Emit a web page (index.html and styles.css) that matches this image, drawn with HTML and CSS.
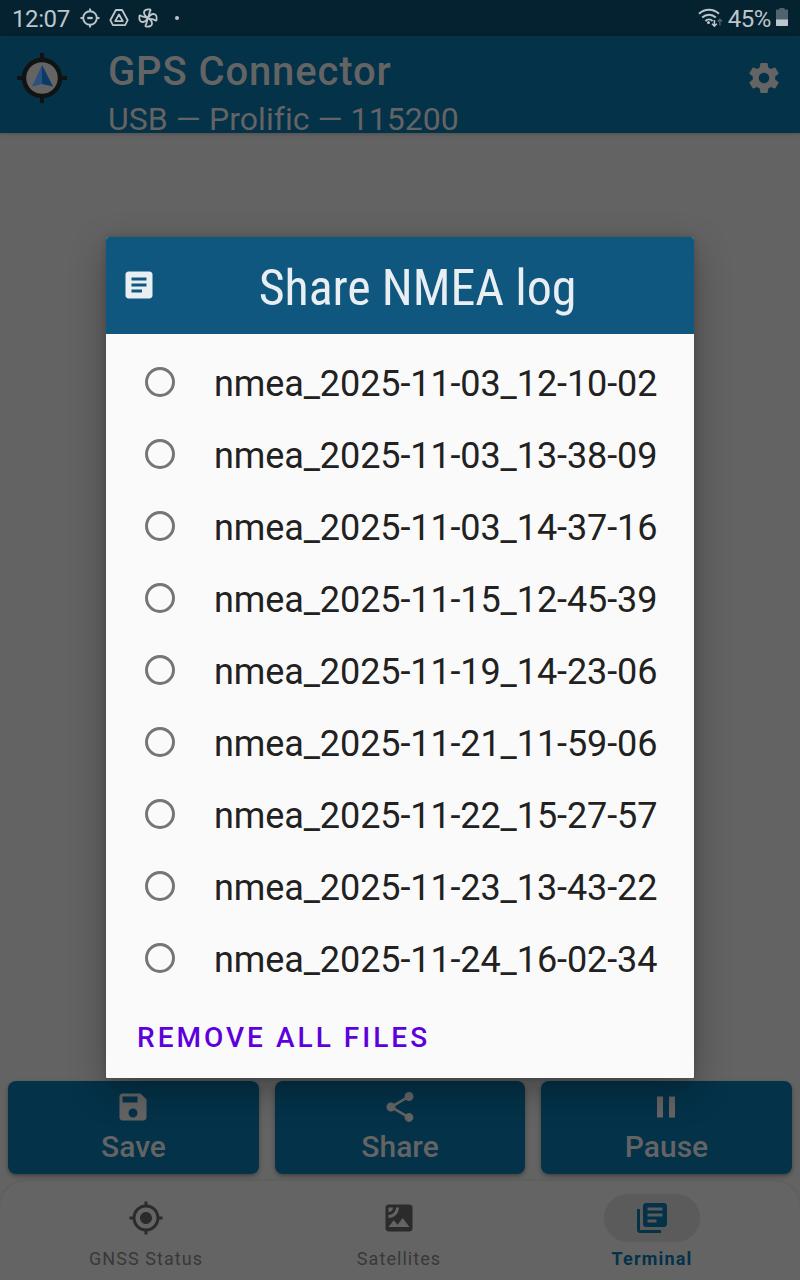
FILE: index.html
```html
<!DOCTYPE html>
<html lang="en">
<head>
    <meta charset="UTF-8">
    <meta name="viewport" content="width=device-width, initial-scale=1.0">
    <title>GPS Connector</title>
    <link rel="stylesheet" href="styles.css">
</head>
<body>
    <div class="status-bar">
        <span class="clock">12:07</span>
        <svg class="status-icon" viewBox="0 0 20 20" fill="none" stroke="currentColor" stroke-width="1.9">
            <circle cx="10" cy="10" r="6.8"/>
            <path d="M10 .5v2.900M10 16.600v2.900M.5 10h2.900M16.600 10h2.900"/>
            <path d="M7.300 10h5.400" stroke-width="2.300"/>
        </svg>
        <svg class="status-icon drive" viewBox="0 0 20 20" fill="none" stroke="currentColor" stroke-width="1.800" stroke-linejoin="round">
            <path d="M6.900 2h6.200l5.600 10.200-2.600 5H3.900l-2.600-5z"/>
            <path d="M10 6.500l3.800 6.600H6.200z"/>
        </svg>
        <svg class="status-icon fan" viewBox="0 0 20 20" fill="none" stroke="currentColor" stroke-width="1.800" stroke-linejoin="round">
            <path d="M10 10C7.500 8.500 5.800 6.500 6 4.200 6.200 2 8.500 1 11.800 1.400c.8.1 1 .9.500 1.500C11 4.700 11.500 7 10 10z"/>
            <path d="M10 10C11.500 7.500 13.500 5.800 15.800 6c2.200.2 3.200 2.500 2.800 5.800-.1.800-.9 1-1.500.5C15.300 11 13 11.500 10 10z"/>
            <path d="M10 10c2.500 1.500 4.200 3.500 4 5.800-.2 2.200-2.500 3.200-5.800 2.800-.8-.1-1-.9-.5-1.500C9 15.300 8.500 13 10 10z"/>
            <path d="M10 10C8.500 12.500 6.500 14.200 4.200 14 2 13.800 1 11.500 1.400 8.200c.1-.8.9-1 1.500-.5C4.700 9 7 8.500 10 10z"/>
        </svg>
        <span class="more-dot"></span>
        <svg class="wifi" viewBox="0 0 26 20" fill="none" stroke="currentColor" stroke-width="2">
            <path d="M1 5.800c5.700-5.300 14.300-5.300 20 0M4.200 9.400c3.900-3.700 9.700-3.700 13.600 0M7.400 12.900c2-1.900 5.200-1.900 7.200 0"/>
            <circle cx="10.500" cy="14.600" r="1.500" fill="currentColor" stroke="none"/>
            <path d="M16.400 12v6M14 15.800l2.400 2.400 2.400-2.400" stroke-width="1.600"/>
            <path d="M21.900 17.500v-6M19.700 13.500l2.200-2.200 2.200 2.200" stroke-width="1.400" opacity=".4"/>
        </svg>
        <span class="battery-text">45%</span>
        <svg class="battery" viewBox="0 0 12 18">
            <path d="M3.500 0h5v1.500H12V18H0V1.500h3.500z" fill="#50646f"/>
            <path d="M0 11.500h12V17q0 1-1 1H1q-1 0-1-1z" fill="#bdc6ca"/>
        </svg>
    </div>

    <header class="app-bar">
        <svg class="app-logo" viewBox="0 0 50 50">
            <path d="M25 0v50M0 25h50" stroke="#111313" stroke-width="4"/>
            <circle cx="25" cy="25" r="18" fill="#646464" stroke="#111313" stroke-width="4.500"/>
            <path d="M25 12v19l-10 2.500z" fill="#29527f"/>
            <path d="M25 12l11 21.500L25 31z" fill="#0c3967"/>
        </svg>
        <div class="app-titles">
            <h1 class="app-title">GPS Connector</h1>
            <p class="app-subtitle">USB — Prolific — 115200</p>
        </div>
        <svg class="icon settings" viewBox="0 0 24 24"><path d="M19.430 12.980c.04-.32.07-.64.07-.98s-.03-.66-.07-.98l2.110-1.650c.19-.15.24-.42.12-.64l-2-3.460c-.12-.22-.39-.3-.61-.22l-2.490 1c-.52-.4-1.080-.73-1.690-.98l-.38-2.650C14.460 2.180 14.250 2 14 2h-4c-.25 0-.46.18-.49.42l-.38 2.650c-.61.25-1.170.59-1.690.98l-2.490-1c-.23-.09-.49 0-.61.22l-2 3.460c-.13.22-.07.49.12.64l2.110 1.650c-.04.32-.07.65-.07.98s.03.66.07.98l-2.110 1.650c-.19.15-.24.42-.12.64l2 3.460c.12.22.39.3.61.22l2.490-1c.52.4 1.080.73 1.690.98l.38 2.650c.03.24.24.42.49.42h4c.25 0 .46-.18.49-.42l.38-2.650c.61-.25 1.170-.59 1.690-.98l2.490 1c.23.09.49 0 .61-.22l2-3.460c.12-.22.07-.49-.12-.64l-2.110-1.650zM12 15.500c-1.930 0-3.500-1.570-3.500-3.500s1.570-3.500 3.500-3.500 3.500 1.570 3.500 3.500-1.570 3.500-3.500 3.500z"/></svg>
    </header>

    <main class="terminal">
        <div class="button-row">
            <button class="btn">
                <svg class="icon" viewBox="0 0 24 24"><path d="M17 3H5c-1.110 0-2 .9-2 2v14c0 1.100.89 2 2 2h14c1.100 0 2-.9 2-2V7l-4-4zm-5 16c-1.660 0-3-1.340-3-3s1.340-3 3-3 3 1.340 3 3-1.340 3-3 3zm3-10H5V5h10v4z"/></svg>
                <span>Save</span>
            </button>
            <button class="btn">
                <svg class="icon" viewBox="0 0 24 24"><path d="M18 16.080c-.76 0-1.440.3-1.960.77L8.910 12.700c.05-.23.09-.46.09-.7s-.04-.47-.09-.7l7.050-4.110c.54.5 1.250.81 2.040.81 1.660 0 3-1.340 3-3s-1.340-3-3-3-3 1.340-3 3c0 .24.04.47.09.7L8.040 9.810C7.500 9.310 6.790 9 6 9c-1.660 0-3 1.340-3 3s1.340 3 3 3c.79 0 1.500-.31 2.040-.81l7.120 4.160c-.05.21-.08.43-.08.65 0 1.610 1.310 2.920 2.920 2.920s2.920-1.310 2.920-2.920-1.310-2.920-2.920-2.920z"/></svg>
                <span>Share</span>
            </button>
            <button class="btn">
                <svg class="icon" viewBox="0 0 24 24"><path d="M6 19h4V5H6v14zm8-14v14h4V5h-4z"/></svg>
                <span>Pause</span>
            </button>
        </div>
    </main>

    <nav class="bottom-nav">
        <a class="nav-item">
            <span class="nav-pill"><svg class="icon" viewBox="0 0 24 24"><path d="M12 8c-2.210 0-4 1.790-4 4s1.790 4 4 4 4-1.790 4-4-1.790-4-4-4zm8.940 3c-.46-4.170-3.770-7.480-7.940-7.940V1h-2v2.060C6.830 3.520 3.520 6.830 3.060 11H1v2h2.060c.46 4.170 3.770 7.480 7.940 7.940V23h2v-2.060c4.170-.46 7.480-3.770 7.940-7.940H23v-2h-2.060zM12 19c-3.870 0-7-3.130-7-7s3.130-7 7-7 7 3.130 7 7-3.130 7-7 7z"/></svg></span>
            <span class="nav-label">GNSS Status</span>
        </a>
        <a class="nav-item">
            <span class="nav-pill"><svg class="icon" viewBox="0 0 24 24"><path d="M19 3H5c-1.100 0-2 .9-2 2v14c0 1.100.9 2 2 2h14c1.100 0 2-.9 2-2V5c0-1.100-.9-2-2-2zM5 4.990h3C8 6.650 6.660 8 5 8V4.990zM5 12v-2c2.760 0 5-2.250 5-5.010h2C12 8.860 8.870 12 5 12zm0 6l3.500-4.500 2.500 3.010L14.500 12l4.500 6H5z"/></svg></span>
            <span class="nav-label">Satellites</span>
        </a>
        <a class="nav-item active">
            <span class="nav-pill"><svg class="icon" viewBox="0 0 24 24"><path d="M4 6H2v14c0 1.100.9 2 2 2h14v-2H4V6z"/><path d="M20 2H8c-1.100 0-2 .9-2 2v12c0 1.100.9 2 2 2h12c1.100 0 2-.9 2-2V4c0-1.100-.9-2-2-2zm-5 13H9v-2h6v2zm4-4H9V9h10v2zm0-4H9V5h10v2z"/></svg></span>
            <span class="nav-label">Terminal</span>
        </a>
    </nav>

    <div class="dialog">
        <div class="dialog-header">
            <svg class="icon" viewBox="0 0 24 24"><path d="M19 3H5c-1.100 0-2 .9-2 2v14c0 1.100.9 2 2 2h14c1.100 0 2-.9 2-2V5c0-1.100-.9-2-2-2zm-5 14H7v-2h7v2zm3-4H7v-2h10v2zm0-4H7V7h10v2z"/></svg>
            <h2 class="dialog-title">Share NMEA log</h2>
        </div>
        <div class="file-list">
            <label class="file-row"><span class="radio"></span><span class="file-name">nmea_2025-11-03_12-10-02</span></label>
            <label class="file-row"><span class="radio"></span><span class="file-name">nmea_2025-11-03_13-38-09</span></label>
            <label class="file-row"><span class="radio"></span><span class="file-name">nmea_2025-11-03_14-37-16</span></label>
            <label class="file-row"><span class="radio"></span><span class="file-name">nmea_2025-11-15_12-45-39</span></label>
            <label class="file-row"><span class="radio"></span><span class="file-name">nmea_2025-11-19_14-23-06</span></label>
            <label class="file-row"><span class="radio"></span><span class="file-name">nmea_2025-11-21_11-59-06</span></label>
            <label class="file-row"><span class="radio"></span><span class="file-name">nmea_2025-11-22_15-27-57</span></label>
            <label class="file-row"><span class="radio"></span><span class="file-name">nmea_2025-11-23_13-43-22</span></label>
            <label class="file-row"><span class="radio"></span><span class="file-name">nmea_2025-11-24_16-02-34</span></label>
        </div>
        <button class="remove-btn">REMOVE ALL FILES</button>
    </div>
</body>
</html>
```
FILE: styles.css
```css
* {
    margin: 0;
    padding: 0;
    box-sizing: border-box;
}

body {
    font-family: Roboto, sans-serif;
    background: #636363;
    height: 1280px;
    overflow: hidden;
    display: flex;
    flex-direction: column;
}

.icon {
    width: 36px;
    height: 36px;
    fill: currentColor;
    flex: none;
}

/* Status bar */
.status-bar {
    height: 36px;
    background: #052231;
    color: #bdc6ca;
    display: flex;
    align-items: center;
    padding: 0 12px;
    font-size: 24px;
}

.clock {
    width: 68px;
    padding-top: 2px;
    letter-spacing: -0.4px;
}

.status-icon {
    width: 20px;
    height: 20px;
    margin-right: 9px;
}

.more-dot {
    width: 4px;
    height: 4px;
    border-radius: 50%;
    background: #bdc6ca;
    margin-left: 8px;
}

.wifi {
    width: 26px;
    height: 20px;
    margin-left: auto;
    margin-right: 4px;
}

.battery-text {
    padding-top: 2px;
    margin-right: 5px;
    letter-spacing: -0.4px;
}

.battery {
    width: 12px;
    height: 18px;
    margin-top: -2px;
}

/* App bar */
.app-bar {
    height: 97px;
    background: #043249;
    color: #646464;
    display: flex;
    padding: 0 18px 0 17px;
    box-shadow: 0 1px 4px rgba(0, 0, 0, 0.2);
}

.app-logo {
    width: 50px;
    height: 50px;
    margin: 17px 41px 0 0;
}

.app-titles {
    flex: 1;
    padding-top: 12px;
}

.app-title {
    font-size: 40px;
    line-height: 47px;
    font-weight: 500;
    letter-spacing: 0.87px;
}

.app-subtitle {
    font-size: 32px;
    line-height: 38px;
    padding-top: 5px;
    letter-spacing: 0.06px;
}

.settings {
    margin-top: 24px;
}

/* Bottom buttons */
.terminal {
    flex: 1;
    display: flex;
    flex-direction: column;
    justify-content: flex-end;
}

.button-row {
    display: grid;
    grid-template-columns: 251px 250px 251px;
    gap: 16px;
    padding: 0 8px 7px;
}

.btn {
    height: 93px;
    border: none;
    border-radius: 8px;
    background: #043249;
    color: #646464;
    font-family: inherit;
    font-size: 30px;
    font-weight: 500;
    line-height: 36px;
    display: flex;
    flex-direction: column;
    align-items: center;
    padding-top: 8px;
    gap: 4px;
    box-shadow: 0 2px 4px rgba(0, 0, 0, 0.35);
}

.btn .icon {
    margin-right: 1px;
}

/* Bottom navigation */
.bottom-nav {
    height: 99px;
    background: #646464;
    border-radius: 26px 26px 0 0;
    box-shadow: 0 0 3px rgba(0, 0, 0, 0.12);
    display: grid;
    grid-template-columns: 254px 252px 254px;
    padding: 13px 0 0 19px;
}

.nav-item {
    display: flex;
    flex-direction: column;
    align-items: center;
    color: #2b2b2b;
}

.nav-pill {
    width: 96px;
    height: 48px;
    border-radius: 24px;
    display: flex;
    align-items: center;
    justify-content: center;
}

.nav-label {
    margin-top: 6px;
    font-size: 18px;
    line-height: 22px;
    letter-spacing: 1.05px;
    color: #383838;
}

.nav-item.active,
.nav-item.active .nav-label {
    color: #043249;
}

.nav-item.active .nav-pill {
    background: #5b5b5b;
}

.nav-item.active .nav-label {
    font-weight: 700;
    letter-spacing: 1.2px;
}

/* Share dialog */
.dialog {
    position: absolute;
    left: 106px;
    top: 237px;
    width: 588px;
    height: 841px;
    background: #fafafa;
    border-radius: 3px 3px 1px 1px;
    overflow: hidden;
    box-shadow: 0 12px 36px rgba(0, 0, 0, 0.3), 0 0 6px rgba(0, 0, 0, 0.15);
}

.dialog-header {
    height: 97px;
    background: #10577f;
    color: #e9eef2;
    display: flex;
    align-items: center;
    padding-left: 15px;
}

.dialog-header .icon {
    margin-bottom: 2px;
}

.dialog-title {
    flex: 1;
    padding: 5px 16px 0 0;
    text-align: center;
    font-family: "Roboto Condensed", Roboto, sans-serif;
    font-stretch: 75%;
    font-size: 50px;
    font-weight: 400;
    letter-spacing: -0.1px;
}

.file-list {
    padding: 12px 0;
}

.file-row {
    height: 72px;
    display: flex;
    align-items: center;
    padding-left: 39px;
    font-size: 36px;
    color: #212121;
}

.file-name {
    padding-top: 4px;
    letter-spacing: -0.1px;
}

.radio {
    width: 30px;
    height: 30px;
    border: 3px solid #757575;
    border-radius: 50%;
    margin-right: 39px;
}

.remove-btn {
    border: none;
    background: none;
    color: #5d00dc;
    font-family: inherit;
    font-size: 28px;
    font-weight: 500;
    line-height: 34px;
    letter-spacing: 3.02px;
    margin: 15px 0 0 31px;
}
```
